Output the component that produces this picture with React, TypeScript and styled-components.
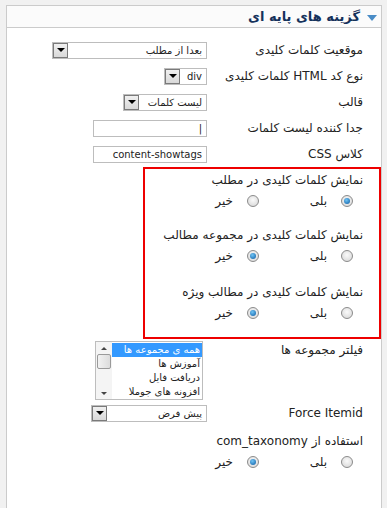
import styled, { createGlobalStyle } from 'styled-components';

const GlobalStyle = createGlobalStyle`
  body {
    margin: 0;
    background: #f1f1f1;
    font-family: Tahoma, "DejaVu Sans", sans-serif;
    color: #222;
  }
`;

const Panel = styled.div`
  direction: rtl;
  margin: 5px 5px 0 6px;
  border: 1px solid #cbcbcb;
  border-bottom: none;
  background: #fff;
  height: 503px;
  box-sizing: border-box;
`;

const Header = styled.div`
  display: flex;
  align-items: center;
  gap: 7px;
  height: 21px;
  padding-right: 4px;
  border-bottom: 1px solid #cbcbcb;
  background: #fbfbfb;
`;

const Caret = styled.span`
  width: 0;
  height: 0;
  border-left: 5px solid transparent;
  border-right: 5px solid transparent;
  border-top: 6px solid #4a8cc6;
  margin-top: 2px;
`;

const Title = styled.h3`
  margin: 0;
  font-size: 13px;
  font-weight: bold;
  color: #16325c;
`;

const Body = styled.div`
  padding: 9px 18px 0 0;
`;

const FieldRow = styled.div<{ $h?: number; $top?: boolean }>`
  display: grid;
  grid-template-columns: 156px auto;
  align-items: ${(p) => (p.$top ? 'start' : 'center')};
  height: ${(p) => p.$h ?? 26}px;
`;

const Label = styled.label<{ $offset?: number }>`
  font-size: 12px;
  line-height: 16px;
  white-space: nowrap;
  margin-top: ${(p) => p.$offset ?? 0}px;
`;

const SelectBox = styled.div<{ $w: number }>`
  display: flex;
  align-items: stretch;
  width: ${(p) => p.$w}px;
  height: 17px;
  box-sizing: border-box;
  border: 1px solid #bdbdbd;
  background: #fff;
`;

const SelectValue = styled.span`
  flex: 1;
  font-size: 10px;
  line-height: 15px;
  padding-right: 4px;
  white-space: nowrap;
  overflow: hidden;
`;

const DropButton = styled.span`
  display: flex;
  align-items: center;
  justify-content: center;
  width: 15px;
  border: 1px solid #7a7a7a;
  background: linear-gradient(#f0f0f0, #d9d9d9);
  box-sizing: border-box;

  &::after {
    content: '';
    border-left: 4px solid transparent;
    border-right: 4px solid transparent;
    border-top: 4px solid #000;
  }
`;

const TextBox = styled.div<{ $w: number }>`
  width: ${(p) => p.$w}px;
  height: 17px;
  box-sizing: border-box;
  border: 1px solid #bdbdbd;
  font-size: 10px;
  line-height: 15px;
  padding-right: 4px;
  direction: ltr;
  text-align: right;
`;

const Highlight = styled.div`
  width: 238px;
  box-sizing: border-box;
  margin: 0 -18px 0 0;
  border: 2px solid #ee0000;
  padding: 0 16px 17px 0;
`;

const Group = styled.div<{ $gap?: number }>`
  margin-top: ${(p) => p.$gap ?? 0}px;
`;

const RadioRow = styled.div`
  display: flex;
  padding-right: 10px;
  margin-top: 6px;
`;

const Option = styled.div`
  display: flex;
  align-items: center;
  gap: 14px;
  width: 94px;
  font-size: 12px;
`;

const Radio = styled.span<{ $on?: boolean }>`
  position: relative;
  width: 12px;
  height: 12px;
  border-radius: 50%;
  border: 1px solid #8b8b8b;
  box-sizing: border-box;
  background: radial-gradient(circle at 50% 40%, #fafafa, #d4d4d4);

  &::after {
    content: '';
    display: ${(p) => (p.$on ? 'block' : 'none')};
    position: absolute;
    left: 2px;
    top: 2px;
    width: 6px;
    height: 6px;
    border-radius: 50%;
    background: radial-gradient(circle at 40% 35%, #6fc4f5, #0b5aa2);
  }
`;

const ListBox = styled.div`
  display: flex;
  width: 108px;
  height: 59px;
  box-sizing: border-box;
  border: 1px solid #bdbdbd;
  margin-top: 2px;
  margin-right: 4px;
`;

const ListItems = styled.div`
  flex: 1;
  padding-top: 1px;
`;

const ListItem = styled.div<{ $sel?: boolean }>`
  font-size: 10px;
  line-height: 14px;
  padding-right: 2px;
  white-space: nowrap;
  background: ${(p) => (p.$sel ? '#3399ff' : 'transparent')};
  color: ${(p) => (p.$sel ? '#fff' : '#222')};
`;

const ScrollBar = styled.div`
  width: 16px;
  display: flex;
  flex-direction: column;
  align-items: center;
  background: #f4f4f4;
`;

const ScrollArrow = styled.span<{ $up?: boolean }>`
  height: 12px;
  display: flex;
  align-items: center;

  &::after {
    content: '';
    border-left: 3px solid transparent;
    border-right: 3px solid transparent;
    ${(p) => (p.$up ? 'border-bottom: 3px solid #444;' : 'border-top: 3px solid #444;')}
  }
`;

const Thumb = styled.span`
  width: 14px;
  height: 15px;
  box-sizing: border-box;
  border: 1px solid #9a9a9a;
  border-radius: 2px;
  background: linear-gradient(90deg, #f2f2f2, #dcdcdc);
`;

const TrackGap = styled.span`
  flex: 1;
`;

const Latin = styled.span`
  direction: ltr;
  unicode-bidi: embed;
`;

const Select = ({ w, value }: { w: number; value: string }) => (
  <SelectBox $w={w}>
    <SelectValue>{value}</SelectValue>
    <DropButton />
  </SelectBox>
);

const YesNo = ({ yes }: { yes: boolean }) => (
  <RadioRow>
    <Option>
      <Radio $on={yes} />
      <span>بلی</span>
    </Option>
    <Option>
      <Radio $on={!yes} />
      <span>خیر</span>
    </Option>
  </RadioRow>
);

export default function App() {
  return (
    <>
      <GlobalStyle />
      <Panel>
        <Header>
          <Caret />
          <Title>گزینه های پایه ای</Title>
        </Header>
        <Body>
          <FieldRow>
            <Label>موقعیت کلمات کلیدی</Label>
            <Select w={155} value="بعدا از مطلب" />
          </FieldRow>
          <FieldRow>
            <Label>نوع کد HTML کلمات کلیدی</Label>
            <Select w={43} value="div" />
          </FieldRow>
          <FieldRow>
            <Label>قالب</Label>
            <Select w={84} value="لیست کلمات" />
          </FieldRow>
          <FieldRow>
            <Label>جدا کننده لیست کلمات</Label>
            <TextBox $w={114}>|</TextBox>
          </FieldRow>
          <FieldRow>
            <Label>کلاس CSS</Label>
            <TextBox $w={114}>content-showtags</TextBox>
          </FieldRow>

          <Highlight>
            <Group>
              <Label>نمایش کلمات کلیدی در مطلب</Label>
              <YesNo yes />
            </Group>
            <Group $gap={16}>
              <Label>نمایش کلمات کلیدی در مجموعه مطالب</Label>
              <YesNo yes={false} />
            </Group>
            <Group $gap={18}>
              <Label>نمایش کلمات کلیدی در مطالب ویژه</Label>
              <YesNo yes={false} />
            </Group>
          </Highlight>

          <FieldRow $h={61} $top>
            <Label $offset={3}>فیلتر مجموعه ها</Label>
            <ListBox>
              <ListItems>
                <ListItem $sel>همه ی مجموعه ها</ListItem>
                <ListItem>آموزش ها</ListItem>
                <ListItem>دریافت فایل</ListItem>
                <ListItem>افزونه های جوملا</ListItem>
              </ListItems>
              <ScrollBar>
                <ScrollArrow $up />
                <Thumb />
                <TrackGap />
                <ScrollArrow />
              </ScrollBar>
            </ListBox>
          </FieldRow>
          <FieldRow>
            <Label>
              <Latin>Force Itemid</Latin>
            </Label>
            <Select w={116} value="پیش فرض" />
          </FieldRow>
          <Group $gap={4}>
            <Label>
              استفاده از <Latin>com_taxonomy</Latin>
            </Label>
            <YesNo yes={false} />
          </Group>
        </Body>
      </Panel>
    </>
  );
}
